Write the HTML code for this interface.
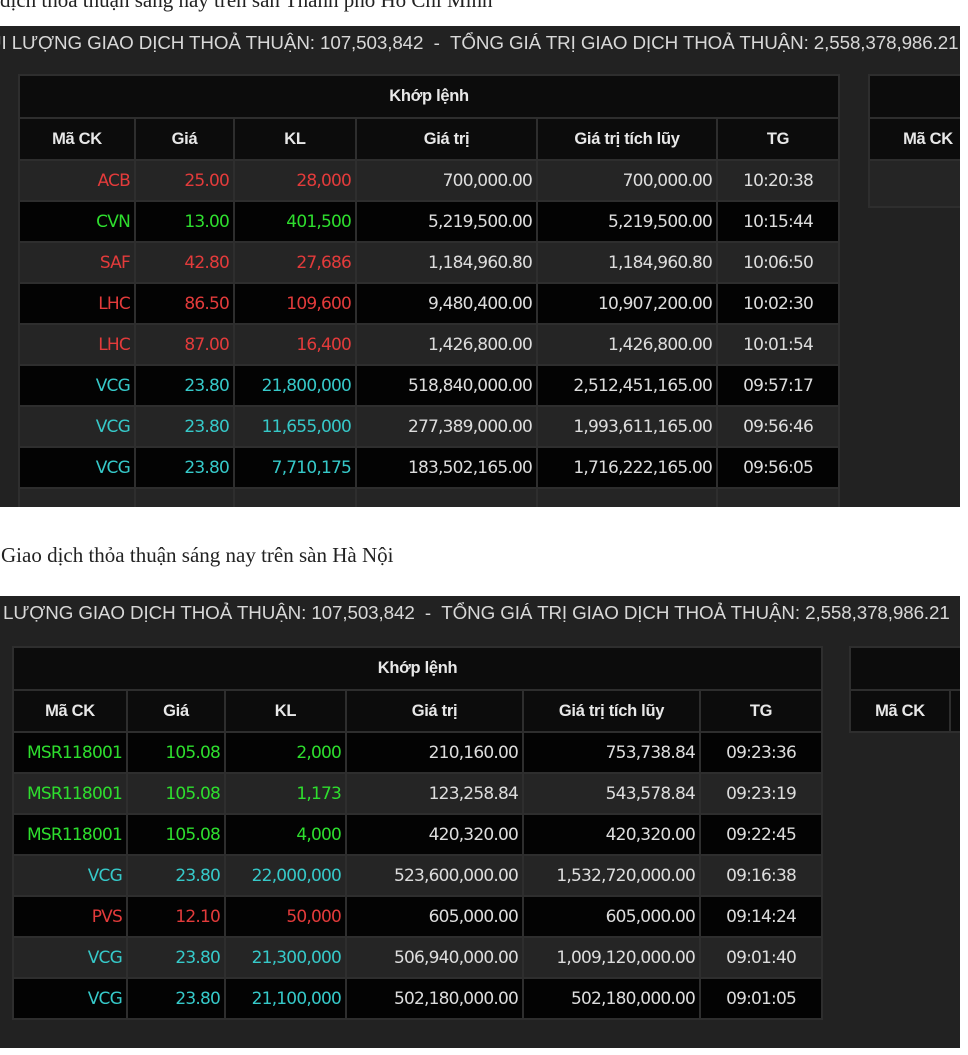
<!DOCTYPE html>
<html><head><meta charset="utf-8">
<style>
body{margin:0;background:#fff;width:968px;height:1055px;overflow:hidden;position:relative;font-family:"Liberation Sans",sans-serif}
.top{position:absolute;left:0;top:-12px;font:21px "Liberation Serif",serif;color:#222;white-space:nowrap}
.panel{position:absolute;left:0;width:960px;background:#222;overflow:hidden}
.title{position:absolute;white-space:nowrap;color:#d8d8d8;font-size:18.8px;letter-spacing:-0.1px}
table{position:absolute;border-collapse:collapse;table-layout:fixed}
td{border:2px solid #2e2e2e;padding:0 4px;height:41px;font:17px "DejaVu Sans",sans-serif;text-align:right;color:#ddd;white-space:nowrap;letter-spacing:-0.8px;box-sizing:border-box}
td.h{background:#0c0c0c;text-align:center;font:bold 16.5px "Liberation Sans",sans-serif;color:#e8e8e8;letter-spacing:-0.3px;height:42px}
tr.g td{background:#252525}
tr.b td{background:#030303}
.r{color:#e33b3b}.gr{color:#2ede2e}.c{color:#36c9c9}
</style></head><body>
<div class="top">dịch thỏa thuận sáng nay trên sàn Thành phố Hồ Chí Minh</div>

<div class="panel" style="top:26px;height:481px">
<div class="title" style="left:-12px;top:6px">ỦI LƯỢNG GIAO DỊCH THOẢ THUẬN: 107,503,842 &nbsp;- &nbsp;TỔNG GIÁ TRỊ GIAO DỊCH THOẢ THUẬN: 2,558,378,986.21</div>
<table style="left:18px;top:48px;width:822px">
<colgroup><col style="width:116px"><col style="width:99px"><col style="width:122px"><col style="width:181px"><col style="width:180px"><col style="width:122px"></colgroup>
<tr><td class="h" colspan="6" style="height:43px">Khớp lệnh</td></tr>
<tr><td class="h">Mã CK</td><td class="h">Giá</td><td class="h">KL</td><td class="h">Giá trị</td><td class="h">Giá trị tích lũy</td><td class="h">TG</td></tr>
<tr class="g"><td class="r">ACB</td><td class="r">25.00</td><td class="r">28,000</td><td>700,000.00</td><td>700,000.00</td><td style="text-align:center">10:20:38</td></tr>
<tr class="b"><td class="gr">CVN</td><td class="gr">13.00</td><td class="gr">401,500</td><td>5,219,500.00</td><td>5,219,500.00</td><td style="text-align:center">10:15:44</td></tr>
<tr class="g"><td class="r">SAF</td><td class="r">42.80</td><td class="r">27,686</td><td>1,184,960.80</td><td>1,184,960.80</td><td style="text-align:center">10:06:50</td></tr>
<tr class="b"><td class="r">LHC</td><td class="r">86.50</td><td class="r">109,600</td><td>9,480,400.00</td><td>10,907,200.00</td><td style="text-align:center">10:02:30</td></tr>
<tr class="g"><td class="r">LHC</td><td class="r">87.00</td><td class="r">16,400</td><td>1,426,800.00</td><td>1,426,800.00</td><td style="text-align:center">10:01:54</td></tr>
<tr class="b"><td class="c">VCG</td><td class="c">23.80</td><td class="c">21,800,000</td><td>518,840,000.00</td><td>2,512,451,165.00</td><td style="text-align:center">09:57:17</td></tr>
<tr class="g"><td class="c">VCG</td><td class="c">23.80</td><td class="c">11,655,000</td><td>277,389,000.00</td><td>1,993,611,165.00</td><td style="text-align:center">09:56:46</td></tr>
<tr class="b"><td class="c">VCG</td><td class="c">23.80</td><td class="c">7,710,175</td><td>183,502,165.00</td><td>1,716,222,165.00</td><td style="text-align:center">09:56:05</td></tr>
<tr class="g"><td></td><td></td><td></td><td></td><td></td><td></td></tr>
</table>
<table style="left:868px;top:48px;width:120px">
<tr><td class="h" style="height:43px">&nbsp;</td></tr>
<tr><td class="h">Mã CK</td></tr>
<tr class="g"><td style="height:47px"></td></tr>
</table>
</div>

<div style="position:absolute;left:1px;top:543px;font:21px 'Liberation Serif',serif;color:#222">Giao dịch thỏa thuận sáng nay trên sàn Hà Nội</div>

<div class="panel" style="top:596px;height:452px">
<div class="title" style="left:3px;top:6px">LƯỢNG GIAO DỊCH THOẢ THUẬN: 107,503,842 &nbsp;- &nbsp;TỔNG GIÁ TRỊ GIAO DỊCH THOẢ THUẬN: 2,558,378,986.21</div>
<table style="left:12px;top:50px;width:809px">
<colgroup><col style="width:114px"><col style="width:98px"><col style="width:121px"><col style="width:177px"><col style="width:177px"><col style="width:122px"></colgroup>
<tr><td class="h" colspan="6" style="height:43px">Khớp lệnh</td></tr>
<tr><td class="h">Mã CK</td><td class="h">Giá</td><td class="h">KL</td><td class="h">Giá trị</td><td class="h">Giá trị tích lũy</td><td class="h">TG</td></tr>
<tr class="b"><td class="gr">MSR118001</td><td class="gr">105.08</td><td class="gr">2,000</td><td>210,160.00</td><td>753,738.84</td><td style="text-align:center">09:23:36</td></tr>
<tr class="g"><td class="gr">MSR118001</td><td class="gr">105.08</td><td class="gr">1,173</td><td>123,258.84</td><td>543,578.84</td><td style="text-align:center">09:23:19</td></tr>
<tr class="b"><td class="gr">MSR118001</td><td class="gr">105.08</td><td class="gr">4,000</td><td>420,320.00</td><td>420,320.00</td><td style="text-align:center">09:22:45</td></tr>
<tr class="g"><td class="c">VCG</td><td class="c">23.80</td><td class="c">22,000,000</td><td>523,600,000.00</td><td>1,532,720,000.00</td><td style="text-align:center">09:16:38</td></tr>
<tr class="b"><td class="r">PVS</td><td class="r">12.10</td><td class="r">50,000</td><td>605,000.00</td><td>605,000.00</td><td style="text-align:center">09:14:24</td></tr>
<tr class="g"><td class="c">VCG</td><td class="c">23.80</td><td class="c">21,300,000</td><td>506,940,000.00</td><td>1,009,120,000.00</td><td style="text-align:center">09:01:40</td></tr>
<tr class="b"><td class="c">VCG</td><td class="c">23.80</td><td class="c">21,100,000</td><td>502,180,000.00</td><td>502,180,000.00</td><td style="text-align:center">09:01:05</td></tr>
</table>
<table style="left:849px;top:50px;width:140px">
<colgroup><col style="width:100px"><col style="width:40px"></colgroup>
<tr><td class="h" colspan="2" style="height:43px">&nbsp;</td></tr>
<tr><td class="h">Mã CK</td><td class="h"></td></tr>
</table>
</div>
</body></html>
